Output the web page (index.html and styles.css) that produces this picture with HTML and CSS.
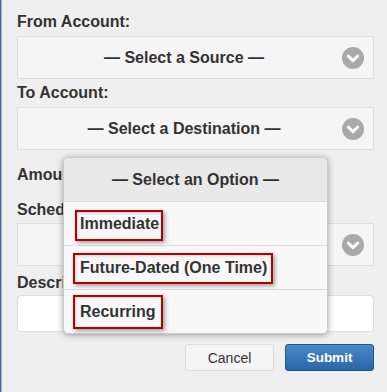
FILE: index.html
```html
<!DOCTYPE html>
<html>
<head>
<meta charset="utf-8">
<link rel="stylesheet" href="styles.css">
</head>
<body>
<div class="page">
  <div class="field first">
    <div class="lbl">From Account:</div>
    <div class="select">
      <span class="sel-text">— Select a Source —</span>
      <svg class="chev" width="22" height="22" viewBox="0 0 22 22"><circle cx="11" cy="11" r="11" fill="#a9a9a9"/><polyline points="6.3,9 11,13.6 15.7,9" fill="none" stroke="#fff" stroke-width="3" stroke-linecap="round" stroke-linejoin="round"/></svg>
    </div>
  </div>
  <div class="field">
    <div class="lbl">To Account:</div>
    <div class="select">
      <span class="sel-text">— Select a Destination —</span>
      <svg class="chev" width="22" height="22" viewBox="0 0 22 22"><circle cx="11" cy="11" r="11" fill="#a9a9a9"/><polyline points="6.3,9 11,13.6 15.7,9" fill="none" stroke="#fff" stroke-width="3" stroke-linecap="round" stroke-linejoin="round"/></svg>
    </div>
  </div>
  <div class="field amount">
    <div class="lbl">Amount:</div>
  </div>
  <div class="field schedule">
    <div class="lbl">Schedule:</div>
    <div class="select">
      <span class="sel-text"></span>
      <svg class="chev" width="22" height="22" viewBox="0 0 22 22"><circle cx="11" cy="11" r="11" fill="#a9a9a9"/><polyline points="6.3,9 11,13.6 15.7,9" fill="none" stroke="#fff" stroke-width="3" stroke-linecap="round" stroke-linejoin="round"/></svg>
    </div>
  </div>
  <div class="field desc">
    <div class="lbl">Description:</div>
    <div class="text-input"></div>
  </div>
  <div class="actions">
    <div class="btn cancel">Cancel</div>
    <div class="btn submit">Submit</div>
  </div>

  <div class="popup">
    <div class="popup-head">— Select an Option —</div>
    <div class="item"><span class="item-text">Immediate</span><span class="mark m1"></span></div>
    <div class="item"><span class="item-text">Future-Dated (One Time)</span><span class="mark m2"></span></div>
    <div class="item last"><span class="item-text">Recurring</span><span class="mark m3"></span></div>
  </div>
</div>
</body>
</html>
```

FILE: styles.css
```css
html, body {
  margin: 0;
  padding: 0;
}
body {
  background: #efefef;
  font-family: "Liberation Sans", Arial, sans-serif;
  color: #333;
  width: 387px;
  height: 392px;
  overflow: hidden;
  border-left: 1px solid #46679f;
  box-sizing: border-box;
  box-shadow: inset 1px 0 #a9b8cf;
}
.page {
  position: relative;
  padding: 12px 12px 0 16px;
  width: 357px;
}
.field {
  margin-top: 4px;
}
.field.first { margin-top: 0; }
.field.amount { margin-top: 15px; }
.field.schedule { margin-top: 15px; }
.field.desc { margin-top: 7px; }
.lbl {
  font-size: 16px;
  font-weight: bold;
  line-height: 20px;
  height: 20px;
  margin-bottom: 4px;
  white-space: nowrap;
}
.schedule .lbl { margin-bottom: 3px; }
.desc .lbl { margin-bottom: 2px; }
.amount .lbl { margin-bottom: 0; }
.select {
  box-sizing: border-box;
  height: 43px;
  background: #f5f5f5;
  border: 1px solid #dcdcdc;
  display: flex;
  align-items: center;
  padding: 0 9px 0 8px;
}
.sel-text {
  flex: 1;
  text-align: center;
  font-size: 16px;
  font-weight: bold;
  white-space: nowrap;
}
.chev {
  display: block;
  flex: none;
}
.text-input {
  box-sizing: border-box;
  height: 37px;
  background: #fff;
  border: 1px solid #dedede;
  border-radius: 4px;
}
.actions {
  margin-top: 12px;
  display: flex;
  justify-content: flex-end;
  gap: 11px;
}
.btn {
  box-sizing: border-box;
  width: 89px;
  height: 27px;
  border-radius: 3px;
  display: flex;
  align-items: center;
  justify-content: center;
  font-size: 14px;
}
.cancel {
  background: #f5f5f5;
  border: 1px solid #dcdcdc;
  color: #333;
}
.submit {
  background: linear-gradient(#4b89c9, #2b65a5);
  border: 1px solid #23558d;
  color: #fff;
  font-weight: bold;
  font-size: 13.5px;
}
.popup {
  position: absolute;
  left: 62px;
  top: 157px;
  width: 265px;
  box-sizing: border-box;
  border: 1px solid #cbcbcb;
  border-radius: 5px;
  background: #f8f8f8;
  box-shadow: 0 1px 6px rgba(0,0,0,0.35);
  overflow: visible;
}
.popup-head {
  height: 43px;
  background: #e9e9e9;
  border-bottom: 1px solid #dcdcdc;
  border-radius: 5px 5px 0 0;
  display: flex;
  align-items: center;
  justify-content: center;
  font-size: 16px;
  font-weight: bold;
}
.item {
  position: relative;
  height: 43px;
  border-bottom: 1px solid #dcdcdc;
  display: flex;
  align-items: center;
  padding-left: 16px;
  font-size: 16px;
  font-weight: bold;
}
.item.last {
  border-bottom: none;
  height: 43px;
}
.mark {
  position: absolute;
  box-sizing: border-box;
  border: 2px solid #b40000;
  box-shadow: 2px 2px 4px rgba(0,0,0,0.35), inset 1px 1px 3px rgba(0,0,0,0.15);
}
.m1 { left: 11px; top: 8px; width: 88px; height: 31px; }
.m2 { left: 9px; top: 7px; width: 200px; height: 31px; }
.m3 { left: 9px; top: 5px; width: 90px; height: 34px; }
```
